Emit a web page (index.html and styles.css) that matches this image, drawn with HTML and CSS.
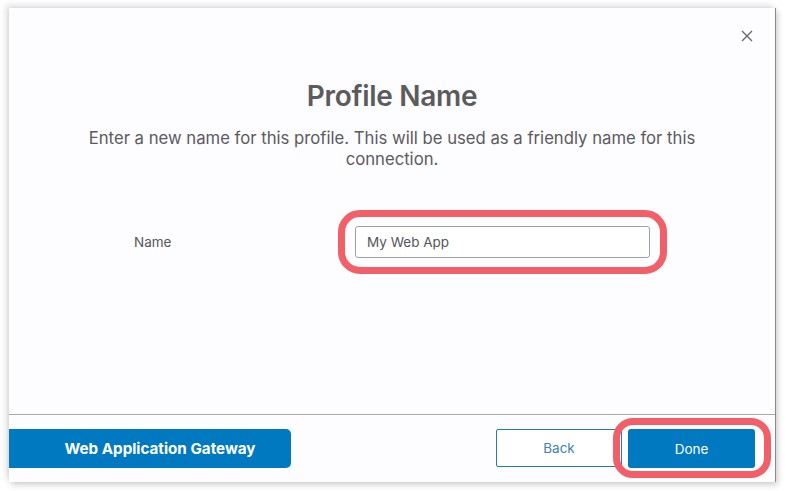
FILE: index.html
```html
<!DOCTYPE html>
<html>
<head>
<meta charset="utf-8">
<link rel="stylesheet" href="styles.css">
</head>
<body>
<div class="dialog">
  <div class="close-row">
    <svg class="close" width="12" height="12" viewBox="0 0 12 12"><path d="M1 1L11 11M11 1L1 11" stroke="#666" stroke-width="1.3" fill="none"/></svg>
  </div>
  <h1 class="title">Profile Name</h1>
  <p class="desc">Enter a new name for this profile. This will be used as a friendly name for this connection.</p>
  <div class="field-row">
    <label class="label">Name</label>
    <div class="ring-input">
      <div class="input">My Web App</div>
    </div>
  </div>
  <div class="spacer"></div>
  <div class="footer">
    <button class="btn-primary gateway">Web Application Gateway</button>
    <div class="actions">
      <button class="btn-outline">Back</button>
      <div class="done-wrap">
        <button class="btn-primary done">Done</button>
        <span class="ring-done"></span>
      </div>
    </div>
  </div>
</div>
</body>
</html>
```

FILE: styles.css
```css
html, body {
  margin: 0;
  padding: 0;
  background: #ffffff;
  width: 786px;
  height: 491px;
  overflow: hidden;
}
body {
  padding: 8px 0 0 9px;
  box-sizing: border-box;
  font-family: Inter, "Noto Sans", sans-serif;
}
.dialog {
  width: 767px;
  height: 474px;
  background: #fdfcfe;
  box-sizing: border-box;
  border-right: 1px solid #8a8a8a;
  box-shadow: -3px -3px 6px rgba(0,0,0,0.12), 2px 3px 6px rgba(0,0,0,0.18);
  display: flex;
  flex-direction: column;
}
.close-row {
  display: flex;
  justify-content: flex-end;
  padding: 22px 22px 0 0;
  height: 12px;
}
.close { display: block; }
.title {
  margin: 38px 0 0;
  text-align: center;
  font-family: Inter, "Noto Sans", sans-serif;
  font-weight: 600;
  font-size: 28px;
  line-height: 32px;
  letter-spacing: -0.3px;
  color: #5b5b5e;
}
.desc {
  margin: 16px auto 0;
  width: 640px;
  text-align: center;
  font-family: Inter, "Noto Sans", sans-serif;
  font-size: 16.7px;
  line-height: 21px;
  color: #5a5a5e;
}
.field-row {
  display: flex;
  align-items: center;
  margin-top: 40px;
}
.label {
  width: 204px;
  padding-left: 125px;
  font-size: 13.5px;
  color: #555559;
}
.ring-input {
  border: 7px solid #f15f68;
  border-radius: 22px;
  padding: 9px 10px;
}
.input {
  width: 295px;
  height: 32px;
  box-sizing: border-box;
  border: 1px solid #9aa3ab;
  border-radius: 3px;
  background: #ffffff;
  padding: 0 11px;
  font-size: 13.5px;
  line-height: 30px;
  color: #555559;
}
.spacer { flex: 1; }
.footer {
  border-top: 1px solid #a9a9ab;
  height: 68px;
  box-sizing: border-box;
  display: flex;
  justify-content: space-between;
  align-items: flex-start;
  padding: 14px 20px 0 0;
}
button {
  font-family: Inter, "Noto Sans", sans-serif;
  cursor: pointer;
  margin: 0;
}
.btn-primary {
  background: #0179c1;
  border: none;
  color: #ffffff;
  height: 39px;
}
.gateway {
  width: 282px;
  padding: 0 0 0 20px;
  border-radius: 0 5px 5px 0;
  font-weight: 700;
  font-size: 15.2px;
}
.actions {
  display: flex;
  gap: 6px;
}
.btn-outline {
  width: 126px;
  height: 38px;
  background: #ffffff;
  border: 1.5px solid #1b7cbf;
  border-radius: 2px;
  color: #3f7fb5;
  font-size: 13.5px;
}
.done-wrap { position: relative; }
.done {
  width: 127px;
  border-radius: 3px;
  font-size: 13.5px;
}
.ring-done {
  position: absolute;
  left: -15px;
  top: -11px;
  right: -16px;
  bottom: -10px;
  border: 7px solid #f15f68;
  border-radius: 20px;
  pointer-events: none;
}
```
